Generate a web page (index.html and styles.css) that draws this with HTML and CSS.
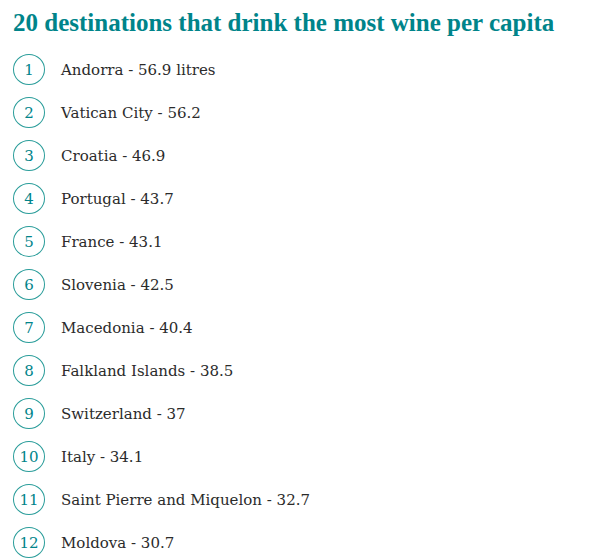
FILE: index.html
```html
<!DOCTYPE html>
<html>
<head>
<meta charset="utf-8">
<link rel="stylesheet" href="styles.css">
</head>
<body>
<div class="page">
  <h2 class="title">20 destinations that drink the most wine per capita</h2>
  <ol class="list">
    <li class="item"><span class="num">1</span><span class="label">Andorra - 56.9 litres</span></li>
    <li class="item"><span class="num">2</span><span class="label">Vatican City - 56.2</span></li>
    <li class="item"><span class="num">3</span><span class="label">Croatia - 46.9</span></li>
    <li class="item"><span class="num">4</span><span class="label">Portugal - 43.7</span></li>
    <li class="item"><span class="num">5</span><span class="label">France - 43.1</span></li>
    <li class="item"><span class="num">6</span><span class="label">Slovenia - 42.5</span></li>
    <li class="item"><span class="num">7</span><span class="label">Macedonia - 40.4</span></li>
    <li class="item"><span class="num">8</span><span class="label">Falkland Islands - 38.5</span></li>
    <li class="item"><span class="num">9</span><span class="label">Switzerland - 37</span></li>
    <li class="item"><span class="num">10</span><span class="label">Italy - 34.1</span></li>
    <li class="item"><span class="num">11</span><span class="label">Saint Pierre and Miquelon - 32.7</span></li>
    <li class="item"><span class="num">12</span><span class="label">Moldova - 30.7</span></li>
  </ol>
</div>
</body>
</html>
```
FILE: styles.css
```css
html, body { margin: 0; padding: 0; background: #fff; }
.page { padding: 8px 13px 0 13px; font-family: "DejaVu Serif", "Liberation Serif", serif; }
.title {
  margin: 0;
  font-family: "Liberation Serif", serif;
  font-weight: bold;
  font-size: 25px;
  line-height: 30px;
  color: #00848a;
}
.list { list-style: none; margin: 16px 0 0 0; padding: 0; display: flex; flex-direction: column; gap: 12px; }
.item { display: flex; align-items: center; gap: 16px; height: 31px; }
.num {
  box-sizing: border-box;
  width: 32px; height: 31px;
  border: 1.5px solid #2a9d9a;
  border-radius: 50%;
  display: flex; align-items: center; justify-content: center;
  color: #00848a;
  font-size: 15px;
}
.label { font-size: 15px; color: #2b2b2b; }
```
